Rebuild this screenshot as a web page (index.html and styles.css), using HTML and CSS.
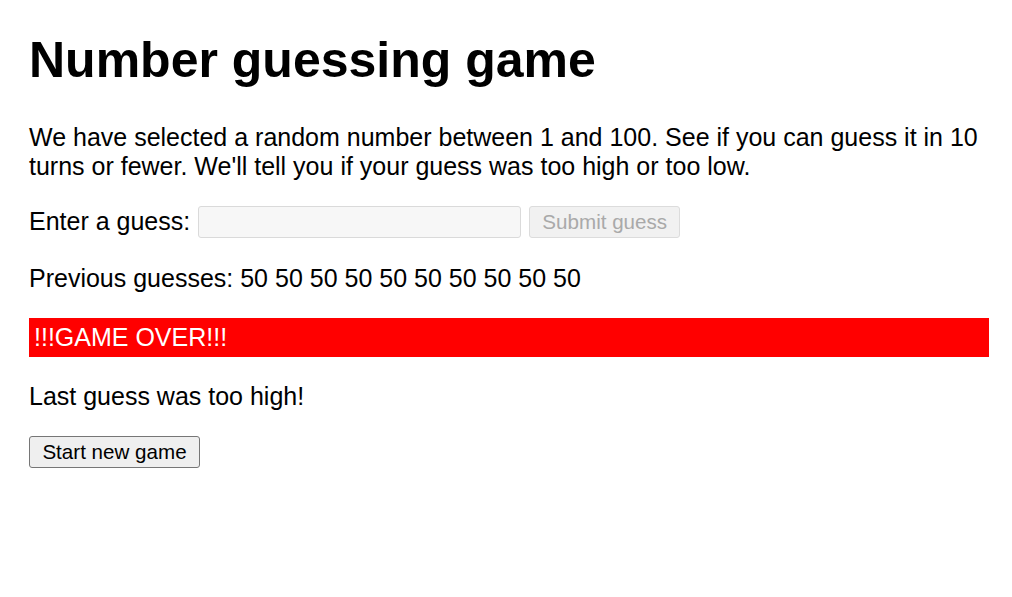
FILE: index.html
```html
<!DOCTYPE html>
<html lang="en">
<head>
<meta charset="utf-8">
<title>Number guessing game</title>
<link rel="stylesheet" href="styles.css">
</head>
<body>
<main class="page">
  <h1 class="title">Number guessing game</h1>
  <p class="text">We have selected a random number between 1 and 100. See if you can guess it in 10 turns or fewer. We'll tell you if your guess was too high or too low.</p>
  <div class="form">
    <label class="label" for="guessField">Enter a guess:</label>
    <input type="number" id="guessField" class="guessField" disabled>
    <input type="submit" value="Submit guess" class="guessSubmit" disabled>
  </div>
  <div class="resultParas">
    <p class="text guesses">Previous guesses: 50 50 50 50 50 50 50 50 50 50</p>
    <p class="text lastResult">!!!GAME OVER!!!</p>
    <p class="text lowOrHi">Last guess was too high!</p>
  </div>
  <button class="newGame" type="button">Start new game</button>
</main>
</body>
</html>
```

FILE: styles.css
```css
html {
  font-family: "Liberation Sans", Arial, sans-serif;
  font-size: 25px;
  color: #000;
  background: #fff;
}

body {
  margin: 0;
}

.page {
  width: 960px;
  padding: 0 0 0 29px;
}

.title {
  font-size: 50px;
  font-weight: bold;
  line-height: 57.5px;
  margin: 32px 0 33px;
}

.text {
  font-size: 25px;
  line-height: 29px;
  margin: 25px 0;
}

.title + .text {
  margin-top: 0;
}

.form {
  display: flex;
  align-items: center;
  height: 32px;
  font-size: 25px;
}

.label {
  line-height: 29px;
  margin-right: 8px;
}

.guessField {
  box-sizing: border-box;
  width: 323px;
  height: 32px;
  margin: 0 8px 0 0;
  padding: 0 4px;
  border: 1px solid #dadada;
  border-radius: 3px;
  background: #f7f7f7;
  font-family: inherit;
  font-size: 20px;
}

.guessSubmit {
  box-sizing: border-box;
  width: 151px;
  height: 32px;
  margin: 0;
  padding: 0;
  border: 1px solid #dcdcdc;
  border-radius: 3px;
  background: #f1f1f1;
  color: #a9a9a9;
  font-family: inherit;
  font-size: 20.6px;
}

.resultParas {
  margin-top: 26px;
}

.lastResult {
  background: #ff0000;
  color: #fff;
  padding: 5px 5px;
}

.newGame {
  box-sizing: border-box;
  display: block;
  width: 171px;
  height: 32px;
  margin: 0;
  padding: 0;
  border: 1px solid #767676;
  border-radius: 3px;
  background: #efefef;
  color: #000;
  font-family: inherit;
  font-size: 20.6px;
}
```
